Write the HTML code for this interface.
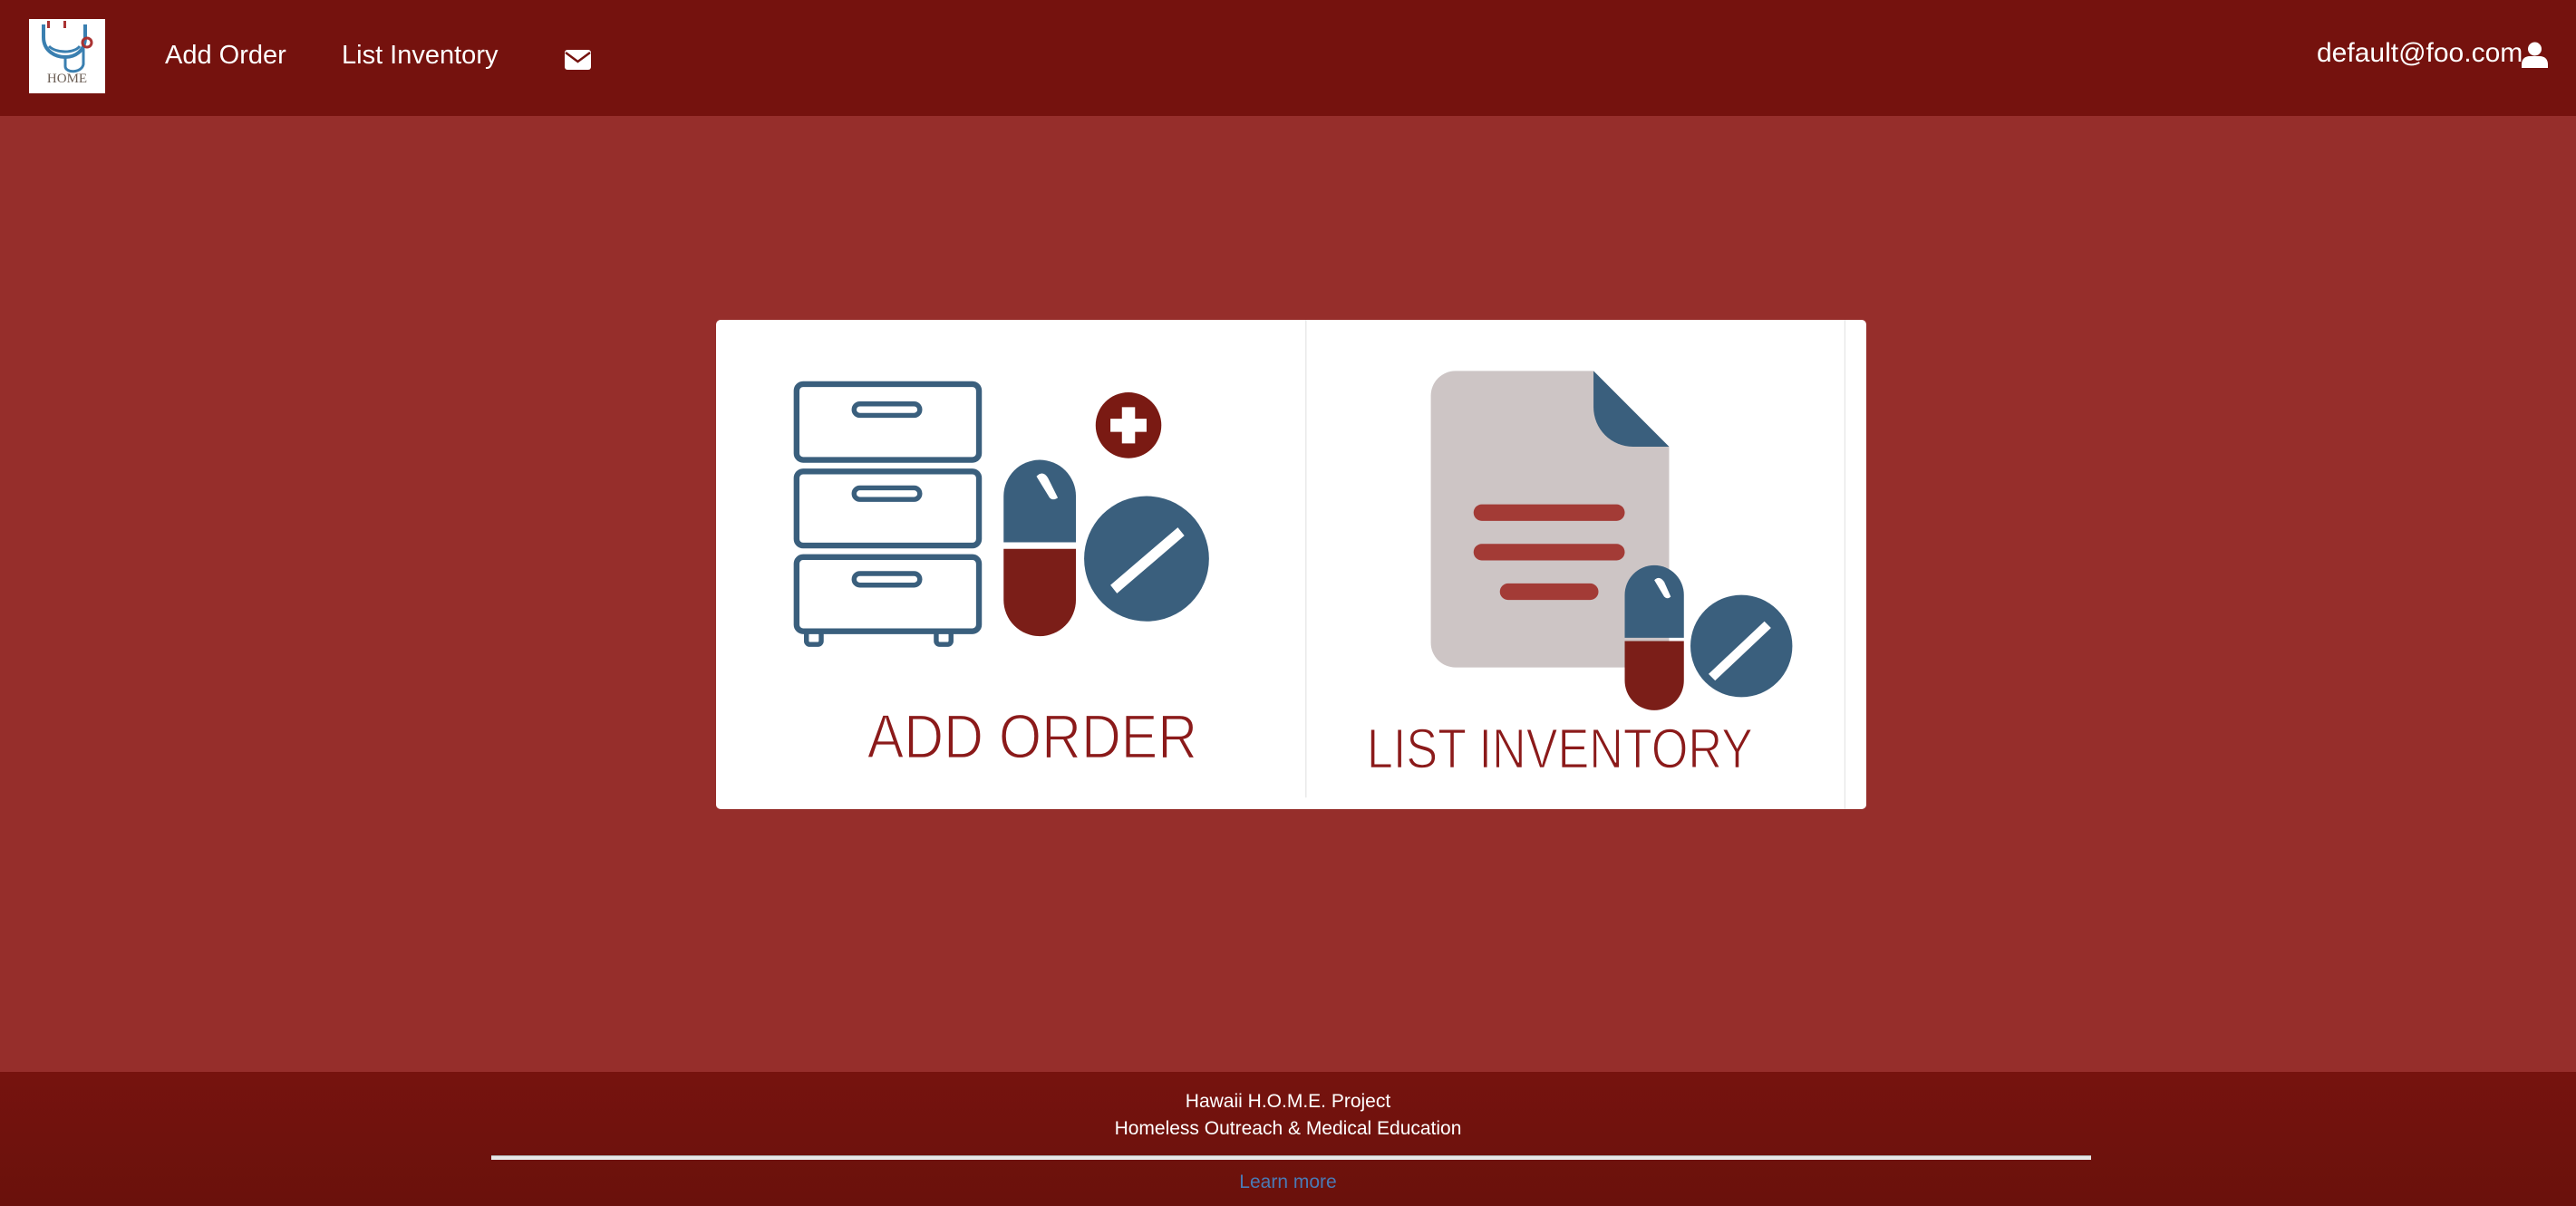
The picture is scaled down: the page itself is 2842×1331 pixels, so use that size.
<!DOCTYPE html>
<html><head><meta charset="utf-8">
<style>
html,body{margin:0;padding:0;}
body{width:2842px;height:1331px;background:#962e2b;font-family:"Liberation Sans",sans-serif;position:relative;overflow:hidden;}
.nav{position:absolute;left:0;top:0;width:2842px;height:128px;background:#75120e;}
.nav .t{position:absolute;color:#fff;font-size:29px;top:45px;line-height:32px;}
.card{position:absolute;left:790px;top:353px;width:1269px;height:540px;background:#fff;border-radius:5px;overflow:hidden;}
.foot{position:absolute;left:0;top:1183px;width:2842px;height:148px;background:linear-gradient(#76130e,#6a110c);color:#fff;text-align:center;}
.foot div{position:absolute;left:0;width:100%;font-size:21px;}
</style></head><body>
<div class="nav">
  <div style="position:absolute;left:32px;top:21px;width:84px;height:82px;background:#fff;">
    <svg width="84" height="82" viewBox="0 0 84 82">
      <path d="M16 6 V20 C16 36 30 42 40 42 C50 42 62 36 62 20 V6" fill="none" stroke="#3a7fb0" stroke-width="4"/>
      <path d="M22 30 C30 38 50 38 56 30" fill="none" stroke="#3a7fb0" stroke-width="3"/>
      <path d="M40 42 V52 C40 60 58 60 60 50 V30" fill="none" stroke="#3a7fb0" stroke-width="3"/>
      <circle cx="64" cy="26" r="5" fill="none" stroke="#a33" stroke-width="3"/>
      <rect x="20" y="2" width="3" height="8" fill="#a33"/><rect x="38" y="2" width="3" height="8" fill="#a33"/>
      <text x="42" y="70" text-anchor="middle" font-family="Liberation Serif,serif" font-size="15" fill="#6b5e55">HOME</text>
    </svg>
  </div>
  <div class="t" style="left:182px;">Add Order</div>
  <div class="t" style="left:377px;">List Inventory</div>
  <svg style="position:absolute;left:623px;top:55px" width="29" height="22" viewBox="0 0 29 22"><rect x="0" y="0" width="29" height="22" rx="3" fill="#fff"/><path d="M1 3 L14.5 13 L28 3" fill="none" stroke="#75120e" stroke-width="2.5"/></svg>
  <div class="t" style="left:2556px;top:43px;font-size:30px;">default@foo.com</div>
  <svg style="position:absolute;left:2782px;top:46px" width="29" height="29" viewBox="0 0 29 29"><circle cx="14.5" cy="8" r="7.5" fill="#fff"/><path d="M0 29 V25 C0 19 4 16 9 16 H20 C25 16 29 19 29 25 V29 Z" fill="#fff"/></svg>
</div>

<div class="card">
<svg width="1269" height="540" viewBox="436 195 700 297" preserveAspectRatio="none">
  <line x1="795" y1="195" x2="795" y2="485" stroke="#e6e6e6" stroke-width="0.7"/>
  <line x1="1123" y1="195" x2="1123" y2="492" stroke="#e6e6e6" stroke-width="0.7"/>
  <g fill="none" stroke="#3a5f7d" stroke-width="3.5">
    <rect x="485" y="234" width="111" height="46" rx="4"/>
    <rect x="485" y="287" width="111" height="45" rx="4"/>
    <rect x="485" y="339" width="111" height="45" rx="4"/>
    <rect x="520" y="246" width="40" height="7" rx="3.5" stroke-width="3"/>
    <rect x="520" y="297" width="40" height="7" rx="3.5" stroke-width="3"/>
    <rect x="520" y="349" width="40" height="7" rx="3.5" stroke-width="3"/>
    <rect x="491" y="384" width="9" height="8" rx="2" stroke-width="3"/>
    <rect x="570" y="384" width="9" height="8" rx="2" stroke-width="3"/>
  </g>
  <circle cx="687" cy="259" r="20" fill="#7a1a13"/>
  <path d="M683 248 h8 v7 h7 v8 h-7 v7 h-8 v-7 h-7 v-8 h7 z" fill="#fff"/>
  <path d="M611 330 V302 A22 22 0 0 1 655 302 V330 Z" fill="#3a5f7d"/>
  <path d="M611 334 H655 V365 A22 22 0 0 1 611 365 Z" fill="#7b1e18"/>
  <path d="M631 290 Q635 286 638 291 L644 303 Q641 305 639 303 Z" fill="#fff"/>
  <circle cx="698" cy="340" r="38" fill="#3a5f7d"/>
  <path d="M676 356 L717 321 L721 326 L680 361 Z" fill="#fff"/>
  <text x="528" y="461" font-size="38" fill="#8b1a1a" stroke="#fff" stroke-width="0.9" paint-order="normal" textLength="201" lengthAdjust="spacingAndGlyphs">ADD ORDER</text>

  <path d="M886 226 H970 L1016 272 V406 H886 A15 15 0 0 1 871 391 V241 A15 15 0 0 1 886 226 Z" fill="#cdc5c5"/>
  <path d="M970 226 L1016 272 H994 A24 24 0 0 1 970 248 Z" fill="#3a5f7d"/>
  <g stroke="#a33b36" stroke-width="10" stroke-linecap="round">
    <line x1="902" y1="312" x2="984" y2="312"/>
    <line x1="902" y1="336" x2="984" y2="336"/>
    <line x1="918" y1="360" x2="968" y2="360"/>
  </g>
  <path d="M989 388 V362 A18 18 0 0 1 1025 362 V388 Z" fill="#3a5f7d"/>
  <path d="M989 390 H1025 V414 A18 18 0 0 1 989 414 Z" fill="#7b1e18"/>
  <path d="M1007 353 Q1010 350 1013 354 L1017 363 Q1015 365 1013 363 Z" fill="#fff"/>
  <circle cx="1060" cy="393" r="31" fill="#3a5f7d"/>
  <path d="M1040 410 L1074 378 L1078 382 L1044 414 Z" fill="#fff"/>
  <text x="832" y="467" font-size="34" fill="#8b1a1a" stroke="#fff" stroke-width="0.8" textLength="235" lengthAdjust="spacingAndGlyphs">LIST INVENTORY</text>
</svg>
</div>

<div class="foot">
  <div style="top:21px;">Hawaii H.O.M.E. Project</div>
  <div style="top:51px;">Homeless Outreach &amp; Medical Education</div>
  <div style="left:542px;width:1765px;top:92px;height:4px;background:#e8e8e8;border-top:1px solid #aaa;"></div>
  <div style="top:110px;color:#4a7ab5;">Learn more</div>
</div>
</body></html>
